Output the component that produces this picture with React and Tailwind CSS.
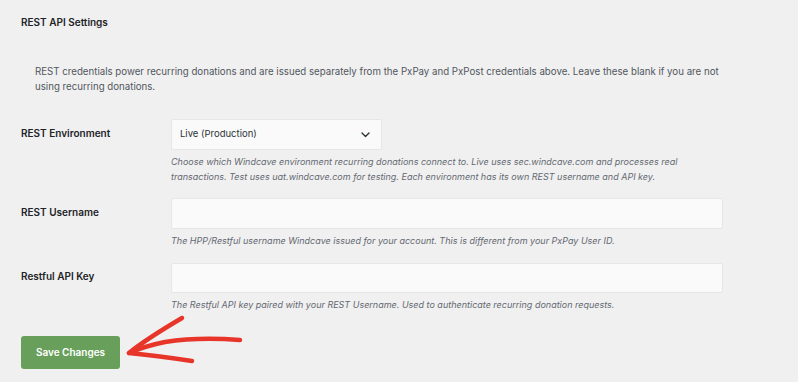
import React from 'react';

const Field = ({ label, labelPad, children, help }) => (
    <div className="flex">
        <div className={`w-[150px] shrink-0 text-[10px] leading-[16px] font-semibold text-[#1d2327] ${labelPad}`}>{label}</div>
        <div>
            {children}
            <p className="mt-[4px] text-[9px] leading-[15px] italic text-[#646970] max-w-[540px]">{help}</p>
        </div>
    </div>
);

const App = () => {
    return (
        <div className="relative w-[798px] h-[382px] overflow-hidden bg-[#f0f0f0] px-[21px] pt-[14px] font-['Inter',sans-serif]">
            <h2 className="text-[10px] leading-[16px] font-semibold text-[#1d2327]">REST API Settings</h2>

            <p className="mt-[34px] pl-[14px] max-w-[705px] text-[9.7px] leading-[15px] text-[#50575e]">
                REST credentials power recurring donations and are issued separately from the PxPay and PxPost credentials above. Leave these blank if you are not using recurring donations.
            </p>

            <div className="mt-[25px]">
                <Field
                    label="REST Environment"
                    labelPad="pt-[6px]"
                    help="Choose which Windcave environment recurring donations connect to. Live uses sec.windcave.com and processes real transactions. Test uses uat.windcave.com for testing. Each environment has its own REST username and API key."
                >
                    <div className="flex items-center justify-between w-[211px] h-[31px] px-[8px] bg-[#fafafa] border border-[#e6e6e6] rounded-[2px] text-[9.5px] text-[#2c3338]">
                        <span>Live (Production)</span>
                        <svg width="9" height="6" viewBox="0 0 9 6" fill="none" className="mr-[3px]">
                            <path d="M1 1l3.5 3.5L8 1" stroke="#2c3338" strokeWidth="1.4" strokeLinecap="round" strokeLinejoin="round" />
                        </svg>
                    </div>
                </Field>
            </div>

            <div className="mt-[14px]">
                <Field
                    label="REST Username"
                    labelPad="pt-[6px]"
                    help="The HPP/Restful username Windcave issued for your account. This is different from your PxPay User ID."
                >
                    <input className="block w-[552px] h-[31px] bg-[#fafafa] border border-[#e6e6e6] rounded-[2px] outline-none" />
                </Field>
            </div>

            <div className="mt-[15px]">
                <Field
                    label="Restful API Key"
                    labelPad="pt-[5px]"
                    help="The Restful API key paired with your REST Username. Used to authenticate recurring donation requests."
                >
                    <input className="block w-[552px] h-[30px] bg-[#fafafa] border border-[#e6e6e6] rounded-[2px] outline-none" />
                </Field>
            </div>

            <button className="mt-[24px] w-[99px] h-[33px] rounded-[3px] bg-[#68a05b] text-white text-[10px] font-semibold">
                Save Changes
            </button>

            {/* annotation arrow */}
            <svg className="absolute left-0 top-0 pointer-events-none" width="798" height="382" viewBox="0 0 798 382" fill="none">
                <path d="M240 340 C 215 338, 190 338, 165 342 C 150 345, 138 349, 129 353" stroke="#e8352a" strokeWidth="4.5" strokeLinecap="round" strokeLinejoin="round" />
                <path d="M182 318 C 165 328, 145 340, 129 353 C 150 355, 172 358, 192 361" stroke="#e8352a" strokeWidth="4.5" strokeLinecap="round" strokeLinejoin="round" />
            </svg>
        </div>
    );
};

export default App;
